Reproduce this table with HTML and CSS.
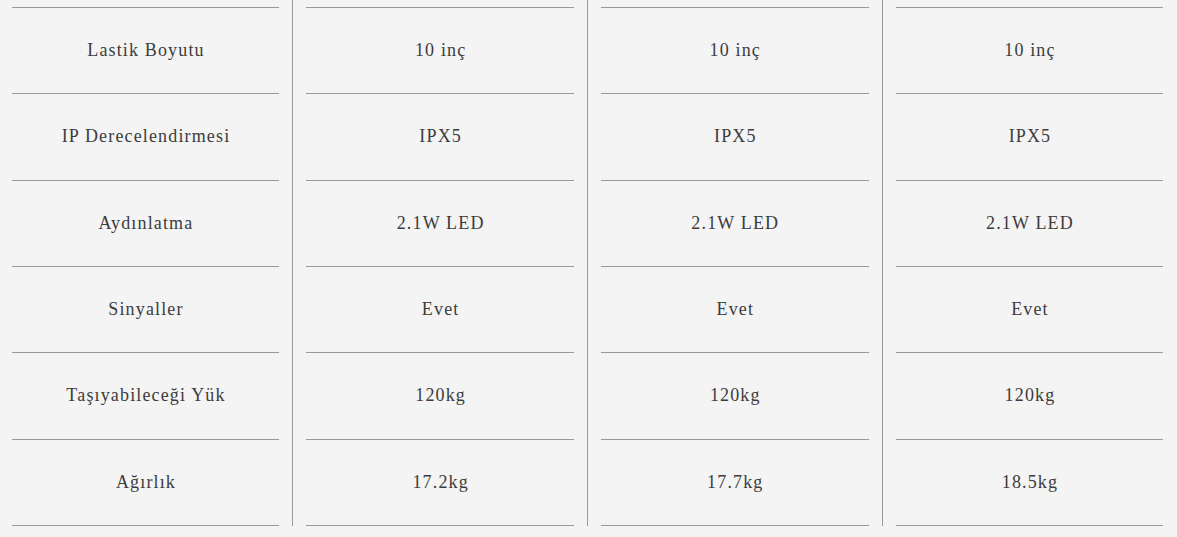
FILE: index.html
```html
<!DOCTYPE html>
<html lang="tr">
<head>
<meta charset="utf-8">
<title>Karşılaştırma</title>
<link rel="stylesheet" href="styles.css">
</head>
<body>
<div class="compare">
  <div class="col">
    <div class="list">
      <div class="cell">Lastik Boyutu</div>
      <div class="cell">IP Derecelendirmesi</div>
      <div class="cell">Aydınlatma</div>
      <div class="cell">Sinyaller</div>
      <div class="cell">Taşıyabileceği Yük</div>
      <div class="cell">Ağırlık</div>
    </div>
  </div>
  <div class="col">
    <div class="list">
      <div class="cell">10 inç</div>
      <div class="cell">IPX5</div>
      <div class="cell">2.1W LED</div>
      <div class="cell">Evet</div>
      <div class="cell">120kg</div>
      <div class="cell">17.2kg</div>
    </div>
  </div>
  <div class="col">
    <div class="list">
      <div class="cell">10 inç</div>
      <div class="cell">IPX5</div>
      <div class="cell">2.1W LED</div>
      <div class="cell">Evet</div>
      <div class="cell">120kg</div>
      <div class="cell">17.7kg</div>
    </div>
  </div>
  <div class="col last">
    <div class="list">
      <div class="cell">10 inç</div>
      <div class="cell">IPX5</div>
      <div class="cell">2.1W LED</div>
      <div class="cell">Evet</div>
      <div class="cell">120kg</div>
      <div class="cell">18.5kg</div>
    </div>
  </div>
</div>
</body>
</html>
```

FILE: styles.css
```css
html, body {
  margin: 0;
  padding: 0;
  background: #f4f4f4;
}
body {
  font-family: "Liberation Serif", "Times New Roman", serif;
  color: #3c3c3c;
}
.compare {
  display: flex;
  align-items: flex-start;
  padding-left: 11.67px;
}
.col {
  flex: 0 0 267.67px;
  width: 267.67px;
  padding-top: 7px;
  padding-right: 13px;
  margin-right: 13px;
  border-right: 1px solid #9a9a9a;
}
.col.last {
  border-right: none;
  padding-right: 0;
  margin-right: 0;
}
.list {
  border-top: 1px solid #9a9a9a;
}
.cell {
  box-sizing: border-box;
  height: 86.33px;
  border-bottom: 1px solid #9a9a9a;
  display: flex;
  align-items: center;
  justify-content: center;
  font-size: 18px;
  letter-spacing: 1.15px;
  padding-left: 1px;
}
```
